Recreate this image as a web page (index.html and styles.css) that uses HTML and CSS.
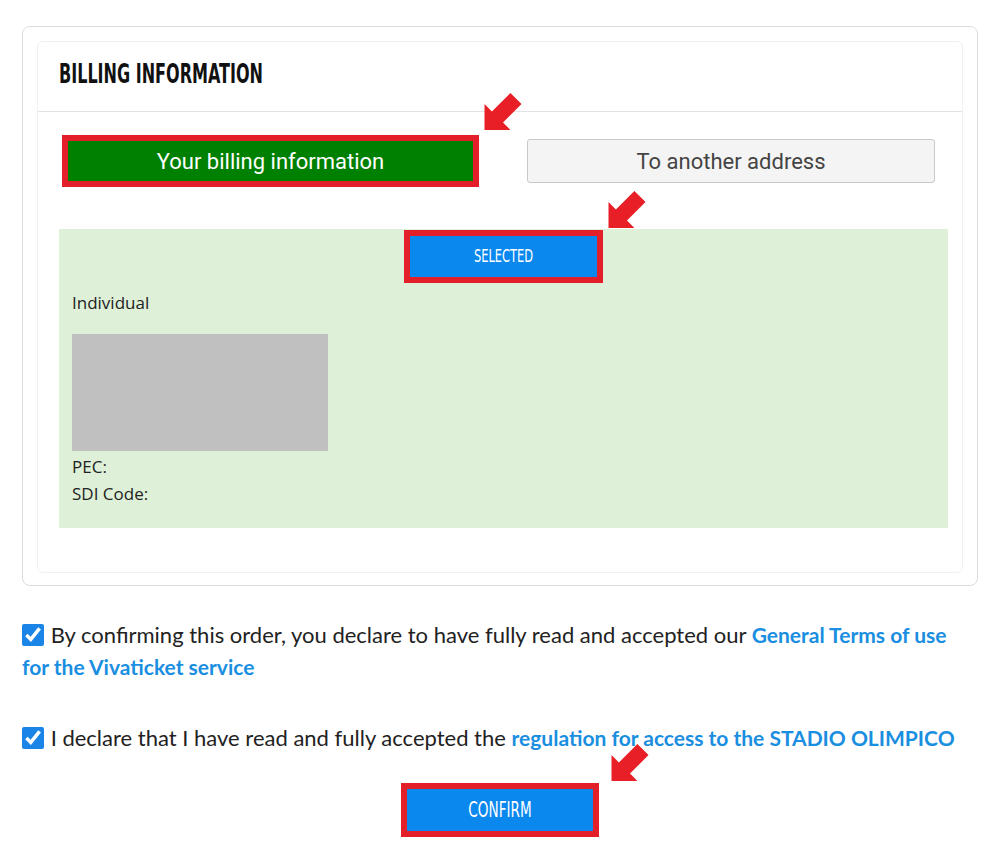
FILE: index.html
```html
<!DOCTYPE html>
<html lang="en">
<head>
    <meta charset="UTF-8">
    <title>Billing information</title>
    <link rel="stylesheet" href="styles.css">
</head>
<body>
    <div class="page">
        <div class="card">
            <div class="inner">
                <div class="card-header">
                    <h2 class="card-title">BILLING INFORMATION</h2>
                </div>

                <div class="choices">
                    <div class="marked">
                        <button class="btn-own">Your billing information</button>
                        <svg class="arrow arrow-own" viewBox="0 0 40 40"><polygon points="0,40 0,12 8,20 28,0 40,12 20,32 28,40"/></svg>
                    </div>
                    <button class="btn-other">To another address</button>
                </div>

                <div class="address">
                    <div class="selected-row">
                        <div class="marked">
                            <span class="btn-blue btn-selected"><span class="narrow">SELECTED</span></span>
                            <svg class="arrow arrow-selected" viewBox="0 0 40 40"><polygon points="0,40 0,12 8,20 28,0 40,12 20,32 28,40"/></svg>
                        </div>
                    </div>
                    <p class="type">Individual</p>
                    <div class="redacted"></div>
                    <p>PEC:</p>
                    <p>SDI Code:</p>
                </div>
            </div>
        </div>

        <div class="terms">
            <label class="check">
                <input type="checkbox" checked>
                By confirming this order, you declare to have fully read and accepted our <a href="#">General Terms of use for the Vivaticket service</a>
            </label>
            <label class="check second">
                <input type="checkbox" checked>
                I declare that I have read and fully accepted the <a href="#">regulation for access to the STADIO OLIMPICO</a>
            </label>
        </div>

        <div class="confirm-row">
            <div class="marked">
                <button class="btn-blue btn-confirm"><span class="narrow">CONFIRM</span></button>
                <svg class="arrow arrow-confirm" viewBox="0 0 40 40"><polygon points="0,40 0,12 8,20 28,0 40,12 20,32 28,40"/></svg>
            </div>
        </div>
    </div>
</body>
</html>
```

FILE: styles.css
```css
* {
    margin: 0;
    padding: 0;
    box-sizing: border-box;
}

body {
    background-color: #fff;
    color: #222;
    font-family: "Open Sans", "Noto Sans", sans-serif;
}

.page {
    padding: 26px 22px 0;
}

.card {
    border: 1px solid #dcdcdc;
    border-radius: 8px;
    padding: 14px 14px 12px;
}

.inner {
    border: 1px solid #f1f1f1;
    border-radius: 6px;
    padding-bottom: 44px;
}

.card-header {
    height: 70px;
    padding: 17px 21px 0;
    border-bottom: 1px solid #e2e2e2;
}

.card-title {
    display: inline-block;
    font-family: "DejaVu Sans", sans-serif;
    font-stretch: condensed;
    font-size: 27px;
    line-height: 30px;
    font-weight: bold;
    color: #111;
    transform: scaleX(0.66);
    transform-origin: left center;
}

.choices {
    display: flex;
    align-items: center;
    gap: 48px;
    padding: 23px 0 0 24px;
}

.marked {
    position: relative;
    border: 6px solid #e3202a;
}

.arrow {
    position: absolute;
    width: 40px;
    height: 37px;
    fill: #e81f26;
}

.arrow-own {
    left: calc(100% + 10px);
    bottom: calc(100% + 11px);
}

.arrow-selected {
    left: calc(100% + 10px);
    bottom: calc(100% + 8px);
}

.arrow-confirm {
    left: calc(100% + 17px);
    bottom: calc(100% + 8px);
}

.btn-own {
    display: block;
    width: 405px;
    height: 40px;
    background-color: #008000;
    color: #fff;
    border: none;
    font-family: Roboto, sans-serif;
    font-size: 22px;
}

.btn-other {
    width: 408px;
    height: 44px;
    background-color: #f4f4f4;
    color: #444;
    border: 1px solid #c8c8c8;
    border-radius: 3px;
    font-family: Roboto, sans-serif;
    font-size: 22px;
}

.address {
    margin: 42px 14px 0 21px;
    background-color: #dff0d8;
    padding: 1px 13px 21px;
    font-size: 17px;
    line-height: 27px;
}

.selected-row {
    display: flex;
    justify-content: center;
    margin-bottom: 6px;
}

.btn-blue {
    display: block;
    background-color: #0a88ee;
    color: #fff;
    border: none;
    font-family: "DejaVu Sans", sans-serif;
    font-stretch: condensed;
    text-align: center;
}

.narrow {
    display: inline-block;
    transform: scaleX(0.75);
}

.btn-selected {
    width: 187px;
    height: 41px;
    line-height: 41px;
    font-size: 17px;
}

.type {
    margin-bottom: 18px;
}

.redacted {
    width: 256px;
    height: 117px;
    background-color: #c0c0c0;
    margin-bottom: 2px;
}

.terms {
    margin: 33px 8px 0 0;
    font-family: Lato, sans-serif;
    font-size: 22px;
    line-height: 32px;
    color: #222;
}

.check {
    display: block;
}

.check.second {
    margin-top: 39px;
}

.check input {
    width: 22px;
    height: 22px;
    accent-color: #1a85e6;
    vertical-align: -3px;
    margin-right: 1px;
}

.check a {
    color: #1a8ee0;
    font-size: 21px;
    font-weight: bold;
    text-decoration: none;
}

.confirm-row {
    display: flex;
    justify-content: center;
    margin-top: 29px;
}

.btn-confirm {
    width: 186px;
    height: 42px;
    font-size: 21px;
}

.btn-confirm .narrow {
    transform: scaleX(0.72);
}
```
